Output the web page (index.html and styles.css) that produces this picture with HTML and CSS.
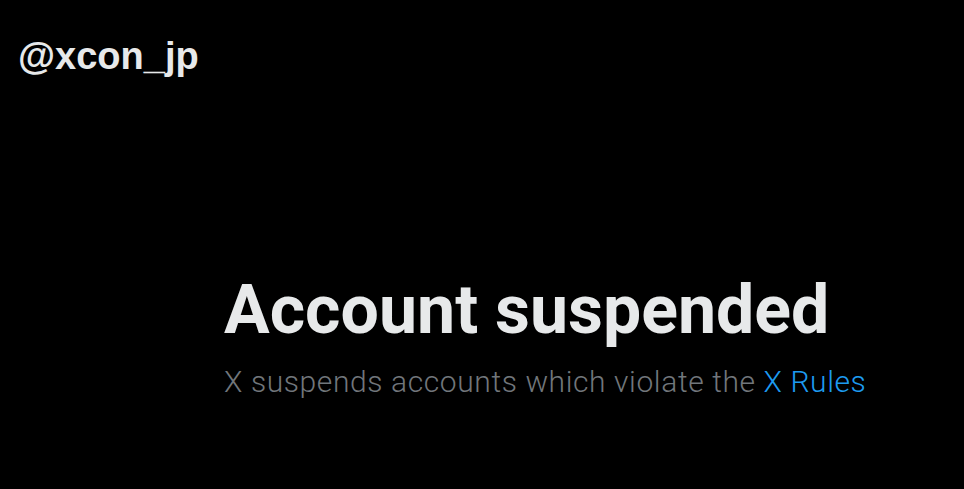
FILE: index.html
```html
<!DOCTYPE html>
<html lang="en">
<head>
<meta charset="utf-8"/>
<meta content="width=device-width, initial-scale=1.0" name="viewport"/>
<title>Account suspended</title>
<link rel="stylesheet" href="styles.css">
</head>
<body>
<header class="profile-header">
    <div class="handle">@xcon_jp</div>
</header>
<main class="empty-state">
    <div class="empty-box">
        <h1 class="empty-title">Account suspended</h1>
        <p class="empty-text">X suspends accounts which violate the <a href="#">X Rules</a></p>
    </div>
</main>
</body>
</html>
```

FILE: styles.css
```css
html, body {
    margin: 0;
    height: 100%;
    background: #000;
}
body {
    font-family: Roboto, "Liberation Sans", sans-serif;
    color: #e7e9ea;
}
.profile-header {
    padding: 34px 18px 0;
}
.handle {
    font-family: "Liberation Sans", Arial, sans-serif;
    font-weight: bold;
    font-size: 38px;
    line-height: 44px;
}
.empty-state {
    padding: 194px 0 0 224px;
}
.empty-title {
    margin: 0;
    font-size: 68px;
    font-weight: 700;
    line-height: 76px;
}
.empty-text {
    margin: 16px 0 0;
    font-size: 30px;
    font-weight: 300;
    letter-spacing: 0.6px;
    line-height: 36px;
    color: #71767b;
}
.empty-text a {
    color: #1d9bf0;
    text-decoration: none;
}
```
